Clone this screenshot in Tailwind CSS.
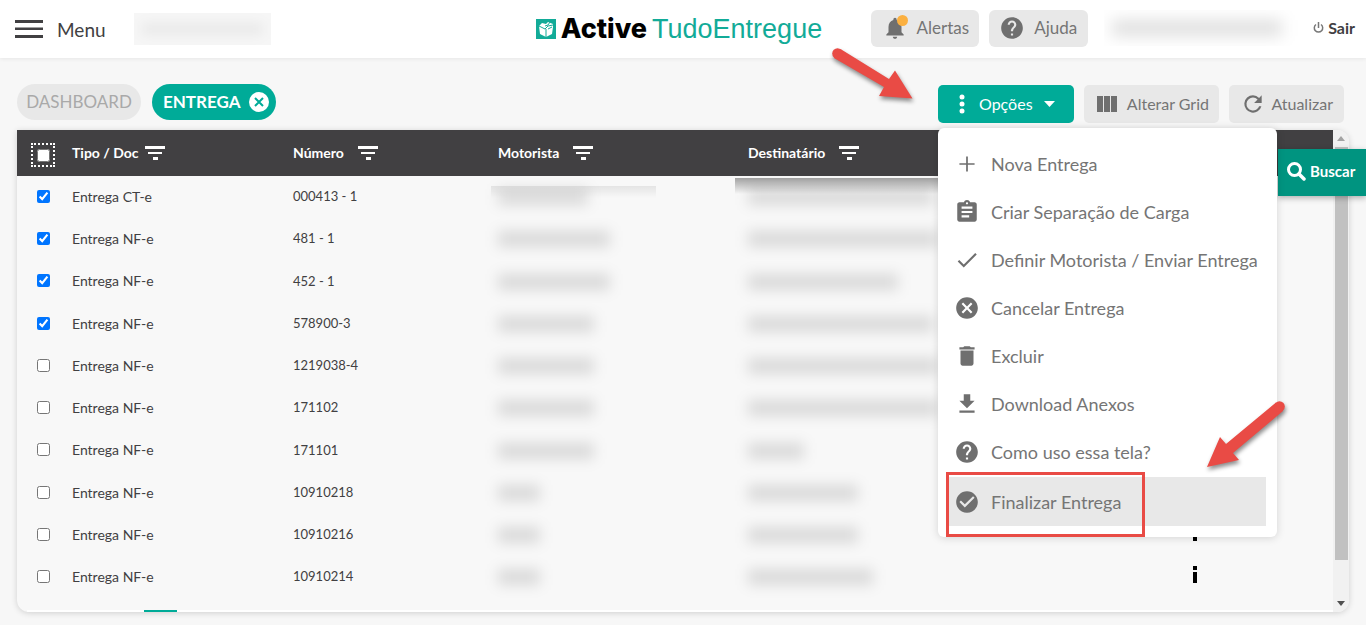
<!DOCTYPE html>
<html lang="pt-BR">
<head>
<meta charset="utf-8">
<title>Active TudoEntregue - Entrega</title>
<script src="https://cdn.jsdelivr.net/npm/@tailwindcss/browser@4"></script>
</head>
<body class="relative min-h-screen overflow-hidden bg-[#f7f7f7] font-['Lato','Noto_Sans',sans-serif] text-[#414042]">
<svg class="hidden" aria-hidden="true">
  <symbol id="filter" viewBox="0 0 20 14"><path fill="currentColor" d="M0 0h20v3H0zM3 6h14v2H3zM8 11h5v3H8z"/></symbol>
  <symbol id="help" viewBox="0 0 24 24"><path fill="currentColor" d="M12 2C6.480 2 2 6.480 2 12s4.480 10 10 10 10-4.480 10-10S17.520 2 12 2zm1 17h-2v-2h2v2zm2.070-7.750-.9.920C13.450 12.900 13 13.500 13 15h-2v-.5c0-1.100.45-2.100 1.170-2.830l1.240-1.260c.37-.36.59-.86.59-1.410 0-1.100-.9-2-2-2s-2 .9-2 2H8c0-2.210 1.790-4 4-4s4 1.790 4 4c0 .88-.36 1.680-.93 2.250z"/></symbol>
</svg>

<header class="flex h-[58px] items-center bg-white pr-[11px] pl-[15px] shadow-[0_1px_4px_rgba(0,0,0,0.07)]">
  <div class="flex flex-1 items-center">
    <button type="button" class="flex items-center gap-[14px] text-[19px]">
      <svg class="h-[18px] w-7" viewBox="0 0 28 18" fill="#414042"><path d="M0 0h28v3H0zM0 7.500h28v2.500H0zM0 15h28v3H0z"/></svg>
      <span class="pt-[3px]">Menu</span>
    </button>
    <div class="ml-7 flex h-8 w-[137px] items-center overflow-hidden bg-[#f6f6f6] px-2">
      <div class="h-3 w-full bg-black/5 blur-[6px]"></div>
    </div>
  </div>
  <h1 class="flex items-center gap-[5px] text-[27px] leading-8">
    <svg class="h-5 w-5" viewBox="0 0 20 20"><rect width="20" height="20" fill="#12ab98"/><path fill="#fff" d="m3 7 3-3 4 1 2-2 5 2v3l-1 7-6 3-6-3z"/><path fill="none" stroke="#12ab98" d="m3 7 6 3 3-3 5-1M10 10v8M9 7l3-1 2-3M12 10l4-2"/></svg>
    <span class="font-['Inter','Liberation_Sans',sans-serif] font-extrabold text-black">Active</span>
    <span class="font-['Liberation_Sans',sans-serif] text-[#12ab98]">TudoEntregue</span>
  </h1>
  <div class="ml-[49px] flex items-center pb-[2px] text-[17px] text-[#757575]">
    <button type="button" class="flex h-[37px] w-[108px] items-center justify-between rounded-md bg-[#e8e8e8] pr-[10px] pl-[11px]">
      <span class="relative"><svg class="h-[26px] w-[26px]" viewBox="0 0 24 24" fill="#6f6f6f"><path d="M12 22c1.100 0 2-.9 2-2h-4c0 1.100.9 2 2 2zm6-6v-5c0-3.070-1.640-5.640-4.500-6.320V4c0-.83-.67-1.500-1.500-1.500s-1.500.67-1.500 1.500v.68C7.630 5.360 6 7.920 6 11v5l-2 2v1h16v-1l-2-2z"/></svg><i class="absolute top-0 right-0 h-[11px] w-[11px] rounded-full bg-[#fbb040]"></i></span>
      <span>Alertas</span>
    </button>
    <button type="button" class="ml-[10px] flex h-[37px] w-[99px] items-center justify-between rounded-md bg-[#e8e8e8] pr-[11px] pl-[10px]">
      <svg class="h-[26px] w-[26px] text-[#6f6f6f]"><use href="#help"/></svg>
      <span>Ajuda</span>
    </button>
    <div class="ml-4 flex h-9 w-[204px] items-center overflow-hidden px-2"><div class="h-4 w-[170px] bg-black/13 blur-[8px]"></div></div>
    <a href="#" class="ml-[5px] flex items-center gap-1 text-base font-bold text-[#414042]">
      <svg class="h-3 w-[11px]" viewBox="0 0 11 12" fill="none" stroke="#777" stroke-width="1.500"><path d="M5.500 0v6M3 2.500a4.200 4.200 0 1 0 5 0"/></svg>Sair</a>
  </div>
</header>

<main class="px-[17px] pt-[26px]">
  <div class="flex items-start justify-between pr-[5px]">
    <nav class="flex gap-[11px] text-[17px]">
      <a href="#" class="flex h-9 w-[124px] items-center justify-center rounded-full bg-[#e8e8e8] text-[#a9a9a9]">DASHBOARD</a>
      <a href="#" class="flex h-9 w-[124px] items-center justify-between rounded-full bg-[#00ab98] pr-[7px] pl-[11px] font-bold text-white">ENTREGA
        <svg class="h-5 w-5" viewBox="0 0 20 20"><circle cx="10" cy="10" r="10" fill="#fff"/><path d="m6 6 8 8m0-8-8 8" stroke="#00ab98" stroke-width="2"/></svg></a>
    </nav>
    <div class="flex gap-[10px] pt-px text-base text-[#757575]">
      <div class="relative">
        <button type="button" class="flex h-[38px] w-[136px] items-center rounded-[5px] bg-[#00ab98] pl-[21px] text-white">
          <svg class="h-5 w-[6px]" viewBox="0 0 6 20" fill="#fff"><circle cx="3" cy="3" r="2.500"/><circle cx="3" cy="10" r="2.500"/><circle cx="3" cy="17" r="2.500"/></svg>
          <span class="ml-[14px]">Opções</span>
          <svg class="ml-[11px] h-[6px] w-[11px]" viewBox="0 0 11 6"><path fill="#fff" d="M0 0h11L5.500 6z"/></svg>
        </button>
        <div role="menu" class="absolute top-[43px] left-0 z-20 w-[339px] rounded-md bg-white pt-3 pr-[11px] pb-[11px] pl-[9px] text-lg shadow-[0_1px_8px_rgba(0,0,0,0.15)]">
          <button type="button" role="menuitem" class="flex h-12 w-full items-center gap-[11px] pl-[7px]"><svg class="h-[26px] w-[26px]" viewBox="0 0 24 24" fill="#6f6f6f"><path d="M11.200 5h1.600v6.200H19v1.600h-6.200V19h-1.600v-6.200H5v-1.600h6.200z"/></svg>Nova Entrega</button>
          <button type="button" role="menuitem" class="flex h-12 w-full items-center gap-[11px] pl-[7px]"><svg class="h-[26px] w-[26px]" viewBox="0 0 24 24" fill="#6f6f6f"><path d="M19 3h-4.180C14.400 1.840 13.300 1 12 1s-2.400.84-2.820 2H5c-1.100 0-2 .9-2 2v14c0 1.100.9 2 2 2h14c1.100 0 2-.9 2-2V5c0-1.100-.9-2-2-2zm-7 0c.55 0 1 .45 1 1s-.45 1-1 1-1-.45-1-1 .45-1 1-1zm2 14H7v-2h7v2zm3-4H7v-2h10v2zm0-4H7V7h10v2z"/></svg>Criar Separação de Carga</button>
          <button type="button" role="menuitem" class="flex h-12 w-full items-center gap-[11px] pl-[7px]"><svg class="h-[26px] w-[26px]" viewBox="0 0 24 24" fill="#6f6f6f"><path d="M9 16.170 4.830 12l-1.420 1.410L9 19 21 7l-1.410-1.410z"/></svg>Definir Motorista / Enviar Entrega</button>
          <button type="button" role="menuitem" class="flex h-12 w-full items-center gap-[11px] pl-[7px]"><svg class="h-[26px] w-[26px]" viewBox="0 0 24 24" fill="#6f6f6f"><path d="M12 2C6.470 2 2 6.470 2 12s4.470 10 10 10 10-4.470 10-10S17.530 2 12 2zm5 13.590L15.590 17 12 13.410 8.410 17 7 15.590 10.590 12 7 8.410 8.410 7 12 10.590 15.590 7 17 8.410 13.410 12 17 15.590z"/></svg>Cancelar Entrega</button>
          <button type="button" role="menuitem" class="flex h-12 w-full items-center gap-[11px] pl-[7px]"><svg class="h-[26px] w-[26px]" viewBox="0 0 24 24" fill="#6f6f6f"><path d="M6 19c0 1.100.9 2 2 2h8c1.100 0 2-.9 2-2V7H6v12zM19 4h-3.500l-1-1h-5l-1 1H5v2h14V4z"/></svg>Excluir</button>
          <button type="button" role="menuitem" class="flex h-12 w-full items-center gap-[11px] pl-[7px]"><svg class="h-[26px] w-[26px]" viewBox="0 0 24 24" fill="#6f6f6f"><path d="M19 9h-4V3H9v6H5l7 7 7-7zM5 18v2h14v-2H5z"/></svg>Download Anexos</button>
          <button type="button" role="menuitem" class="flex h-12 w-full items-center gap-[11px] pl-[7px]"><svg class="h-[26px] w-[26px] text-[#6f6f6f]"><use href="#help"/></svg>Como uso essa tela?</button>
          <button type="button" role="menuitem" class="mt-px flex h-[49px] w-full items-center gap-[11px] bg-[#e8e8e8] pl-[7px]"><svg class="h-[26px] w-[26px]" viewBox="0 0 24 24" fill="#6f6f6f"><path d="M12 2C6.480 2 2 6.480 2 12s4.480 10 10 10 10-4.480 10-10S17.520 2 12 2zm-2 15-5-5 1.410-1.410L10 14.170l7.590-7.590L19 8l-9 9z"/></svg>Finalizar Entrega</button>
          <div class="absolute bottom-0 left-[8px] h-[65px] w-[199px] border-3 border-[#e94b45]"></div>
        </div>
      </div>
      <button type="button" class="flex h-[38px] w-[135px] items-center justify-between rounded-[5px] bg-[#e8e8e8] pr-[10px] pl-[13px]"><svg class="h-4 w-5" viewBox="0 0 20 16" fill="#6f6f6f"><path d="M0 0h6v16H0zM7 0h6v16H7zM14 0h6v16h-6z"/></svg>Alterar Grid</button>
      <button type="button" class="flex h-[38px] w-[115px] items-center justify-between rounded-[5px] bg-[#e8e8e8] pr-[11px] pl-[11px]"><svg class="h-[26px] w-[26px]" viewBox="0 0 24 24" fill="#6f6f6f"><path d="M17.650 6.350A7.960 7.960 0 0 0 12 4a8 8 0 1 0 7.730 10h-2.080A6 6 0 1 1 12 6c1.660 0 3.140.69 4.220 1.780L13 11h7V4z"/></svg>Atualizar</button>
    </div>
  </div>

  <section class="mt-[7px] flex overflow-hidden rounded-b-xl rounded-tr-xl bg-[#f8f8f8] shadow-[0_1px_6px_rgba(0,0,0,0.16)]">
    <div class="flex-1">
      <table class="w-full table-fixed border-collapse text-left text-[13px]">
        <colgroup><col class="w-[55px]"><col class="w-[221px]"><col class="w-[205px]"><col class="w-[250px]"><col class="w-[437px]"><col></colgroup>
        <thead class="h-[46px] bg-[#414042] text-sm text-white">
          <tr>
            <th class="pl-[14px]"><span class="mt-1 flex h-6 w-6 items-center justify-center border-2 border-dotted border-white"><input type="checkbox" aria-label="Selecionar todos" class="h-[13px] w-[13px]"></span></th>
            <th><span class="flex items-center gap-[6px]">Tipo / Doc<svg class="h-[14px] w-5"><use href="#filter"/></svg></span></th>
            <th><span class="flex items-center gap-[14px]">Número<svg class="h-[14px] w-5"><use href="#filter"/></svg></span></th>
            <th><span class="flex items-center gap-[14px]">Motorista<svg class="h-[14px] w-5"><use href="#filter"/></svg></span></th>
            <th><span class="flex items-center gap-[14px]">Destinatário<svg class="h-[14px] w-5"><use href="#filter"/></svg></span></th>
            <th></th>
          </tr>
        </thead>
        <tbody id="rows"></tbody>
      </table>
      <div class="h-[14px] pt-3 pl-[10px]"><div class="h-[2px] bg-white pl-[117px]"><div class="h-full w-[33px] bg-[#00ab98]"></div></div></div>
    </div>
    <div class="flex w-4 flex-col items-center justify-between bg-[#f1f1f1] py-[6px]">
      <svg class="h-[5px] w-2" viewBox="0 0 8 5"><path fill="#a3a3a3" d="M0 5h8L4 0z"/></svg>
      <div class="mt-[6px] mb-auto h-[413px] w-[13px] bg-[#c1c1c1]"></div>
      <svg class="h-[5px] w-2" viewBox="0 0 8 5"><path fill="#505050" d="M0 0h8L4 5z"/></svg>
    </div>
  </section>
</main>

<button type="button" class="absolute top-[149px] right-0 z-10 flex h-[47px] w-[88px] items-center gap-[4px] bg-[#009480] pb-[3px] pl-[9px] text-[15px] font-bold text-white shadow-[0_2px_6px_rgba(0,0,0,0.3)]">
  <svg class="h-[19px] w-[19px]" viewBox="0 0 19 19" fill="none" stroke="#fff" stroke-width="3"><circle cx="7.500" cy="7.500" r="6"/><path d="m12 12 5 5" stroke-linecap="round" stroke-width="3.500"/></svg>Buscar</button>

<!-- Annotation arrows -->
<svg class="pointer-events-none absolute top-[40px] left-[825px] z-30 h-[70px] w-[100px] drop-shadow-[1px_3px_2px_rgba(0,0,0,0.45)]" viewBox="825 40 100 70" fill="#e94b45"><path d="m840.500 49 48.500 30 6-8.500 17.500 28-33.500-2.500 5-9-50-29z"/><circle cx="837.500" cy="53.500" r="5.300"/></svg>
<svg class="pointer-events-none absolute top-[395px] left-[1200px] z-30 h-[80px] w-[95px] drop-shadow-[1px_3px_2px_rgba(0,0,0,0.45)]" viewBox="1200 395 95 80" fill="#e94b45"><path d="m1276 402.500-50 41.500-6-7-13 30 32-7-6-7 50-42z"/><circle cx="1279.500" cy="406.500" r="5.300"/></svg>

<script>
const rows = [
  ['Entrega CT-e', '000413 - 1', 90, 185], ['Entrega NF-e', '481 - 1', 112, 190],
  ['Entrega NF-e', '452 - 1', 112, 150], ['Entrega NF-e', '578900-3', 96, 185],
  ['Entrega NF-e', '1219038-4', 96, 190], ['Entrega NF-e', '171102', 96, 190],
  ['Entrega NF-e', '171101', 96, 56], ['Entrega NF-e', '10910218', 42, 110],
  ['Entrega NF-e', '10910216', 42, 110], ['Entrega NF-e', '10910214', 42, 125]
];
const shades = [
  '<div class="absolute top-[10px] -left-[7px] h-3 w-[165px] bg-linear-to-b from-black/8 to-transparent"></div>',
  '<div class="absolute top-[2px] -left-[13px] h-4 w-[203px] bg-linear-to-b from-black/35 to-transparent"></div>'
];
document.getElementById('rows').innerHTML = rows.map(([type, number, driver, recipient], i) => `
  <tr class="h-[42px] nth-[4n+3]:h-[43px]">
    <td class="pl-5"><input type="checkbox" aria-label="Selecionar ${number}" class="mb-[2px] block h-[13px] w-[13px]" ${i < 4 ? 'checked' : ''}></td>
    <td class="pb-px text-sm">${type}</td><td>${number}</td>
    <td class="relative">${i ? '' : shades[0]}<div class="h-4 bg-black/12 blur-[7px]" style="width:${driver}px"></div></td>
    <td class="relative">${i ? '' : shades[1]}<div class="h-4 bg-black/12 blur-[7px]" style="width:${recipient}px"></div></td>
    <td class="pb-1 pl-[8px]">${i > 7 ? '<svg class="h-5 w-1" viewBox="0 0 4 20"><path d="M0 1h4v4H0zM0 7h4v11H0z"/></svg>' : ''}</td>
  </tr>`).join('');
</script>
</body>
</html>
